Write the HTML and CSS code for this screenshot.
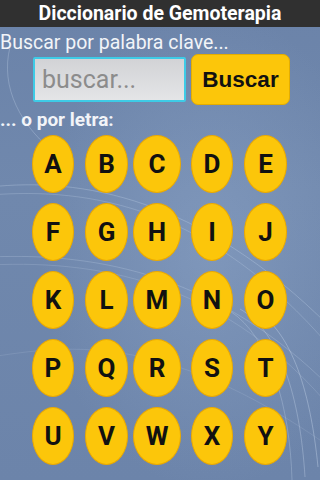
FILE: index.html
```html
<!DOCTYPE html>
<html lang="es">
<head>
<meta charset="utf-8">
<link rel="stylesheet" href="styles.css">
</head>
<body>
<div class="screen">
  <svg class="swirl" width="320" height="453" viewBox="0 0 320 453" aria-hidden="true">
    <g fill="none" stroke="#c8d6ea" stroke-width="1">
      <path d="M-10 160 C 80 150, 200 170, 330 300" opacity="0.3"/>
      <path d="M-10 168 C 90 160, 210 180, 330 320" opacity="0.25"/>
      <path d="M-10 230 C 100 225, 220 250, 330 360" opacity="0.25"/>
      <path d="M-10 238 C 110 232, 230 262, 330 380" opacity="0.2"/>
      <path d="M-10 330 C 60 320, 160 300, 330 420" opacity="0.15"/>
      <path d="M10 20 C 0 60, 20 100, 60 130" opacity="0.3"/>
      <path d="M250 280 C 290 300, 310 360, 318 440" opacity="0.4"/>
      <path d="M240 282 C 280 305, 300 370, 305 450" opacity="0.35"/>
      <path d="M230 284 C 270 310, 290 380, 292 453" opacity="0.3"/>
    </g>
  </svg>
  <header class="titlebar">Diccionario de Gemoterapia</header>
  <main class="content">
    <p class="label">Buscar por palabra clave...</p>
    <div class="search">
      <input class="field" type="text" placeholder="buscar...">
      <button class="btn" type="button">Buscar</button>
    </div>
    <p class="label bold">... o por letra:</p>
    <div class="letters">
      <button class="oval">A</button><button class="oval">B</button><button class="oval">C</button><button class="oval">D</button><button class="oval">E</button>
      <button class="oval">F</button><button class="oval">G</button><button class="oval">H</button><button class="oval">I</button><button class="oval">J</button>
      <button class="oval">K</button><button class="oval">L</button><button class="oval">M</button><button class="oval">N</button><button class="oval">O</button>
      <button class="oval">P</button><button class="oval">Q</button><button class="oval">R</button><button class="oval">S</button><button class="oval">T</button>
      <button class="oval">U</button><button class="oval">V</button><button class="oval">W</button><button class="oval">X</button><button class="oval">Y</button>
    </div>
  </main>
</div>
</body>
</html>
```
FILE: styles.css
```css
* { box-sizing: border-box; }
html, body { margin: 0; padding: 0; }
body {
  width: 320px;
  height: 480px;
  overflow: hidden;
  font-family: Roboto, "Noto Sans", sans-serif;
}
.screen {
  position: relative;
  width: 320px;
  height: 480px;
  background:
    radial-gradient(ellipse 170px 240px at 210px 250px, rgba(150,174,208,0.4), rgba(150,174,208,0) 100%),
    linear-gradient(180deg, #6b83a9 0%, #7088ad 40%, #6c84aa 100%);
  overflow: hidden;
}
.swirl {
  position: absolute;
  left: 0;
  top: 27px;
}
.titlebar {
  position: relative;
  height: 27px;
  background: #303030;
  color: #fff;
  font-weight: 700;
  font-size: 19.5px;
  line-height: 27px;
  text-align: center;
}
.content {
  position: relative;
  display: flex;
  flex-direction: column;
}
.label {
  margin: 0;
  color: #f2f4f8;
  font-size: 19.5px;
  line-height: 22px;
}
.content > .label:first-child { margin-top: 5px; }
.label.bold {
  font-weight: 700;
  font-size: 19px;
  margin-top: 4px;
}
.search {
  display: flex;
  align-items: center;
  margin-top: 0;
  padding-left: 33px;
  gap: 5px;
}
.field {
  width: 153px;
  height: 45px;
  border: 2px solid #3ecbe6;
  border-radius: 2px;
  background: linear-gradient(180deg, #d2d3d6 0%, #e4e5e7 100%);
  font-family: Roboto, sans-serif;
  font-size: 25px;
  padding: 0 0 0 7px;
  color: #333;
  outline: none;
}
.field::placeholder { color: #8c8c8c; }
.btn {
  width: 99px;
  height: 51px;
  border: 1px solid #e4ad00;
  border-radius: 7px;
  background: #fcc60a;
  color: #111;
  font-family: "Liberation Sans", Arial, sans-serif;
  font-weight: 700;
  font-size: 22.5px;
  padding: 0;
}
.letters {
  display: grid;
  grid-template-columns: 53px 48px 58px 53px 43px;
  row-gap: 10px;
  padding-left: 32px;
  margin-top: 4px;
}
.oval {
  width: 42px;
  height: 58px;
  border-radius: 50%;
  border: 1px solid #eaa900;
  background: #fcc60a;
  color: #111;
  font-family: Roboto, "Liberation Sans", sans-serif;
  font-weight: 700;
  font-size: 26px;
  padding: 0;
  display: flex;
  align-items: center;
  justify-content: center;
}
.oval:nth-child(5n+2), .oval:nth-child(5n) { width: 43px; }
.oval:nth-child(5n+3) { width: 48px; }
```
